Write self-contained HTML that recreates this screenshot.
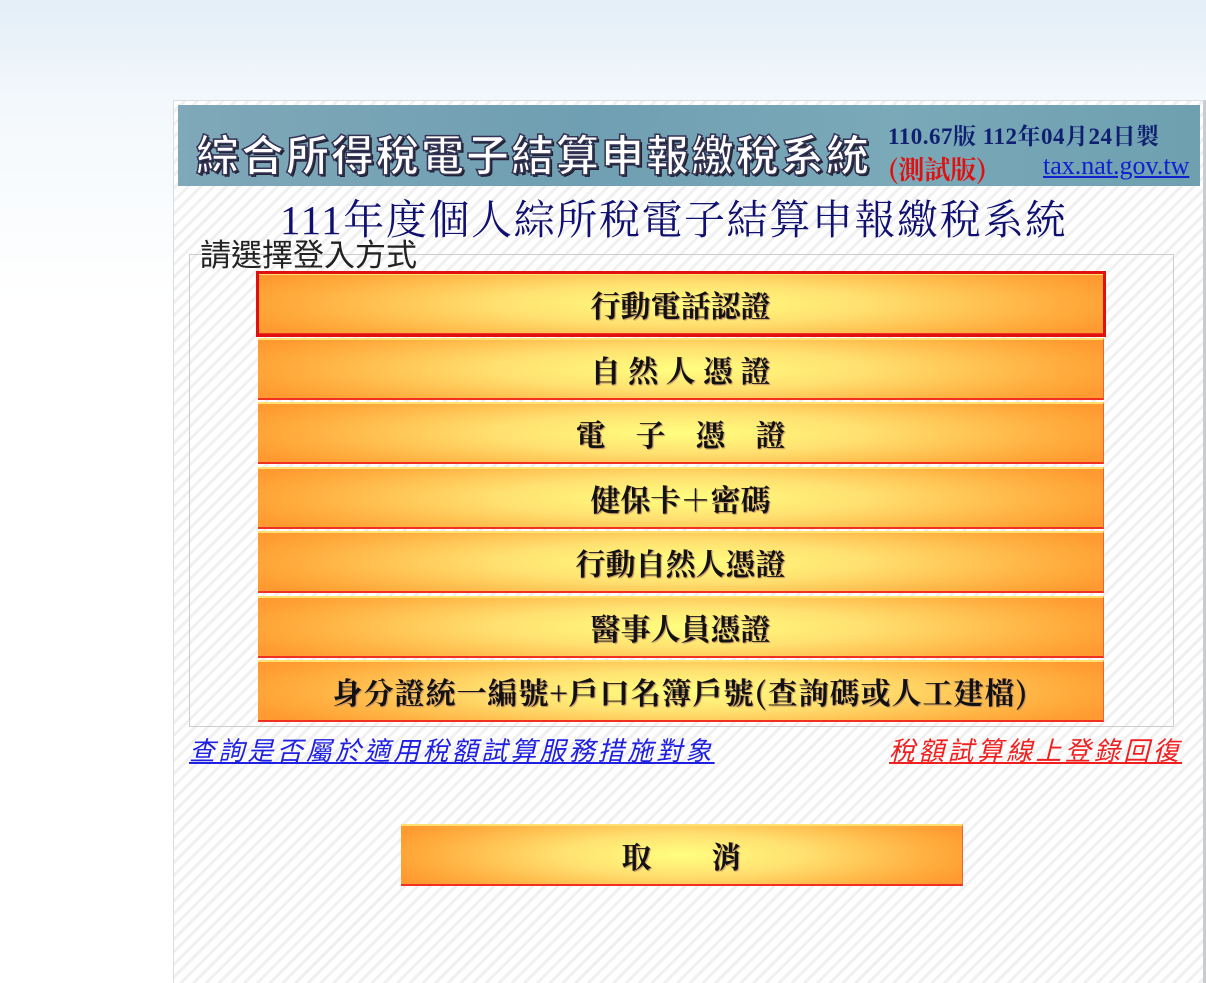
<!DOCTYPE html>
<html><head><meta charset="utf-8"><style>
html{background:#fff}
body{margin:0;width:1206px;height:982px;overflow:hidden;background:linear-gradient(180deg,#e3eef7 0,#f3f8fc 100px,#fff 300px);font-family:"Liberation Serif","Noto Serif CJK SC","Noto Sans CJK TC",serif;position:relative}
.panel{position:absolute;left:173px;top:100px;width:1029px;height:882px;border:1px solid #d8dde2;border-right:3px solid #c8ccd0;border-bottom:none;
background:#fff repeating-linear-gradient(135deg,#fff 0 6px,#f0f0f0 6px 9px);}
.banner{position:absolute;left:178px;top:105px;width:1022px;height:81px;background:linear-gradient(90deg,#7fa8b8 0,#6f9fb2 40%,#7aa9b8 70%,#6ea0b0);}
.bt{position:absolute;left:196px;top:122px;font:bold 43px "Noto Sans CJK TC",sans-serif;color:#fff;letter-spacing:2px;-webkit-text-stroke:1.5px #335;text-shadow:2px 2px 0 #223;white-space:nowrap}
.ver{position:absolute;left:888px;top:118px;font:bold 23px "Liberation Serif","Noto Serif CJK TC",serif;color:#102070;white-space:nowrap;letter-spacing:.5px}
.test{position:absolute;left:888px;top:150px;font:bold 26px "Noto Serif CJK TC",serif;color:#e01010}
.url{position:absolute;left:1043px;top:151px;font:26px "Liberation Serif",serif;color:#1020d0;text-decoration:underline;white-space:nowrap}
.title{position:absolute;left:280px;top:187px;font:41px "Liberation Serif","Noto Serif CJK TC",serif;color:#101070;white-space:nowrap;letter-spacing:1.6px}
.fs{position:absolute;left:189px;top:254px;width:983px;height:471px;border:1px solid #ccc}
.leg{position:absolute;left:200px;top:233px;font:31px "Noto Sans CJK TC",sans-serif;color:#222;line-height:40px}
.b{position:absolute;left:258px;width:845px;height:58px;border-top:2px solid #ffe070;border-bottom:2px solid #f03020;border-right:1px solid #f06030;
background:radial-gradient(ellipse 55% 90% at 50% 50%,#ffff80 0,#ffe070 40%,#ffb040 80%,#ff9a30 100%);
text-align:center;font:bold 30px "Noto Serif CJK TC",serif;color:#111}
.b span{line-height:58px;display:block;text-shadow:1px 1px 1px #b86}
.sel{outline:3px solid #e01010;outline-offset:-1px}
.l1{position:absolute;left:189px;top:731px;font:italic 26px "Noto Sans CJK TC",sans-serif;color:#2020e0;text-decoration:underline;letter-spacing:3.2px;white-space:nowrap}
.l2{position:absolute;left:889px;top:731px;font:italic 26px "Noto Sans CJK TC",sans-serif;color:#f02020;text-decoration:underline;letter-spacing:3.3px;white-space:nowrap}
</style></head><body>
<div class="panel"></div>
<div class="banner"></div>
<div class="bt">綜合所得稅電子結算申報繳稅系統</div>
<div class="ver">110.67版 112年04月24日製</div>
<div class="test">(測試版)</div>
<div class="url">tax.nat.gov.tw</div>
<div class="title">111年度個人綜所稅電子結算申報繳稅系統</div>
<div class="fs"></div>
<div class="leg">請選擇登入方式</div>
<div class="b sel" style="top:273px"><span>行動電話認證</span></div>
<div class="b" style="top:338px"><span>自 然 人 憑 證</span></div>
<div class="b" style="top:402px"><span>電　子　憑　證</span></div>
<div class="b" style="top:467px"><span>健保卡＋密碼</span></div>
<div class="b" style="top:531px"><span>行動自然人憑證</span></div>
<div class="b" style="top:596px"><span>醫事人員憑證</span></div>
<div class="b" style="top:660px"><span style="letter-spacing:1px">身分證統一編號+戶口名簿戶號(查詢碼或人工建檔)</span></div>
<div class="l1">查詢是否屬於適用稅額試算服務措施對象</div>
<div class="l2">稅額試算線上登錄回復</div>
<div class="b" style="top:824px;left:401px;width:561px"><span>取　　消</span></div>
</body></html>
